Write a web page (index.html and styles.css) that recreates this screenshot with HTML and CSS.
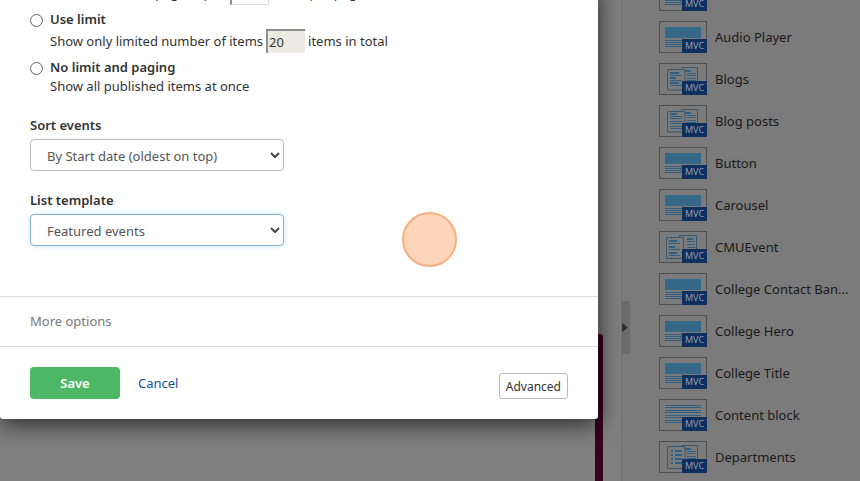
FILE: index.html
```html
<!DOCTYPE html>
<html lang="en">
<head>
<meta charset="utf-8">
<title>Edit events widget</title>
<link rel="stylesheet" href="styles.css">
</head>
<body>
<svg class="symbols" aria-hidden="true">
  <symbol id="banner" viewBox="0 0 48 32">
    <path class="fill" d="M6 6h36v11H6z"/>
    <path class="line" d="M6 19.5h36M6 21.5h36M6 23.5h36M6 25.5h36"/>
  </symbol>
  <symbol id="text" viewBox="0 0 48 32">
    <path class="line" d="M6 6.5h36M6 8.5h36M6 11.5h36M6 13.5h36M6 16.5h36M6 18.5h36M6 21.5h36M6 23.5h36"/>
  </symbol>
  <symbol id="back" viewBox="0 0 48 32">
    <path class="page" d="M22.5 5.500v-1h16v17h-10"/>
    <path class="bold" d="M26 8h6"/>
    <path class="line" d="M28 10.500h9M28 12.500h9M28 15.500h9M28 17.500h9"/>
  </symbol>
  <symbol id="blogs" viewBox="0 0 48 32">
    <use href="#back"/>
    <path class="page" d="M8.500 6.500h17.500v20.500h-17.500z"/>
    <path class="bold" d="M11 10h9M11 15h6M11 20h9"/>
    <path class="line" d="M11 12.500h12M11 17.500h12M11 22.500h12"/>
  </symbol>
  <symbol id="posts" viewBox="0 0 48 32">
    <use href="#back"/>
    <path class="page" d="M8.500 6.500h17.500v20.500h-17.500z"/>
    <path class="bold" d="M11 9h7"/>
    <path class="line" d="M11 11.500h12M11 13.500h12M11 16.500h12M11 18.500h12M11 21.500h12M11 23.500h12"/>
  </symbol>
  <symbol id="event" viewBox="0 0 48 32">
    <path class="page" d="M20.500 6.500v-2h17v17h-10"/>
    <path class="bold" d="M28 8h6"/>
    <path class="line" d="M28 10.500h8M28 13.500h8M28 16.500h8"/>
    <path class="page" d="M7.500 6.500h17v21h-17z"/>
    <path class="bold" d="M10 10h8M10 16h6M10 22h8"/>
    <path class="line" d="M10 12.500h11M10 18.500h11M10 24.500h11"/>
  </symbol>
  <symbol id="list" viewBox="0 0 48 32">
    <use href="#back"/>
    <path class="page" d="M8.500 5.500h17.500v22h-17.500z"/>
    <path class="bold" d="M12 10h2M16 10h7M12 14h2M16 14h7M12 18h2M16 18h7M12 22h2M16 22h7"/>
  </symbol>
</svg>

<main class="canvas"><div class="block"></div></main>

<aside class="sidebar">
  <button class="collapse" aria-label="Toggle widgets panel"><svg viewBox="0 0 5 8"><path d="M0 0l5 4-5 4z"/></svg></button>
  <ul class="widgets">
    <li><span class="thumb"><svg><use href="#banner"/></svg><b>MVC</b></span><span></span></li>
    <li><span class="thumb"><svg><use href="#banner"/></svg><b>MVC</b></span><span>Audio Player</span></li>
    <li><span class="thumb"><svg><use href="#blogs"/></svg><b>MVC</b></span><span>Blogs</span></li>
    <li><span class="thumb"><svg><use href="#posts"/></svg><b>MVC</b></span><span>Blog posts</span></li>
    <li><span class="thumb"><svg><use href="#banner"/></svg><b>MVC</b></span><span>Button</span></li>
    <li><span class="thumb"><svg><use href="#banner"/></svg><b>MVC</b></span><span>Carousel</span></li>
    <li><span class="thumb"><svg><use href="#event"/></svg><b>MVC</b></span><span>CMUEvent</span></li>
    <li><span class="thumb"><svg><use href="#banner"/></svg><b>MVC</b></span><span>College Contact Ban...</span></li>
    <li><span class="thumb"><svg><use href="#banner"/></svg><b>MVC</b></span><span>College Hero</span></li>
    <li><span class="thumb"><svg><use href="#banner"/></svg><b>MVC</b></span><span>College Title</span></li>
    <li><span class="thumb"><svg><use href="#text"/></svg><b>MVC</b></span><span>Content block</span></li>
    <li><span class="thumb"><svg><use href="#list"/></svg><b>MVC</b></span><span>Departments</span></li>
  </ul>
</aside>

<form class="dialog" role="dialog" aria-label="Events">
  <div class="fields">
    <div class="desc with-input"><label for="page-size">Divide the list on pages up to</label><input id="page-size" class="count active" type="text" value="20"><span>items per page</span></div>
    <div class="option"><input type="radio" name="limit" id="use-limit"><label for="use-limit">Use limit</label></div>
    <div class="desc with-input"><label for="limit-size">Show only limited number of items</label><input id="limit-size" class="count" type="text" value="20" disabled><span>items in total</span></div>
    <div class="option"><input type="radio" name="limit" id="no-limit"><label for="no-limit">No limit and paging</label></div>
    <div class="desc">Show all published items at once</div>
    <div class="field">
      <label for="sort">Sort events</label>
      <div class="select"><select id="sort"><option>By Start date (oldest on top)</option></select><svg viewBox="0 0 10 6"><path d="M1 1l4 4 4-4"/></svg></div>
    </div>
    <div class="field">
      <label for="template">List template</label>
      <div class="select focused"><select id="template"><option>Featured events</option></select><svg viewBox="0 0 10 6"><path d="M1 1l4 4 4-4"/></svg></div>
    </div>
  </div>
  <div class="more"><a href="#more">More options</a></div>
  <footer class="actions">
    <button class="save" type="button">Save</button>
    <a class="cancel" href="#cancel">Cancel</a>
    <button class="advanced" type="button">Advanced</button>
  </footer>
</form>
<div class="click-marker"></div>
</body>
</html>
```

FILE: styles.css
```css
* { box-sizing: border-box; }

body {
  margin: 0;
  height: 100vh;
  display: flex;
  overflow: hidden;
  position: relative;
  background: #808080;
  color: #333;
  font: 13px/19px "Noto Sans", "Open Sans", sans-serif;
}

button, input, select { font: inherit; color: inherit; }
a { text-decoration: none; }
.symbols { position: absolute; width: 0; height: 0; }

.fill { fill: #356787; }
.line, .bold, .page { fill: none; stroke: #2f5f82; }
.bold { stroke-width: 2; }
.page { fill: #7b7b7b; stroke: #38586f; }

/* Page canvas behind the dialog */
.canvas { flex: 1; display: flex; padding: 334px 18px 0 0; }
.block { flex: 1; border-right: 8px solid #38001c; border-top-right-radius: 3px; }

/* Widgets panel */
.sidebar {
  width: 239px;
  display: flex;
  flex-direction: column;
  justify-content: flex-end;
  position: relative;
  overflow: hidden;
  border-left: 1px solid #737373;
  background: #7b7b7b;
  color: #1a1a1a;
}
.collapse {
  position: absolute;
  left: 0;
  top: 301px;
  width: 8px;
  height: 53px;
  padding: 0;
  border: 0;
  display: flex;
  align-items: center;
  background: #6c6c6c;
}
.collapse svg { width: 6px; height: 9px; fill: #2b2b2b; }
.widgets {
  list-style: none;
  margin: 0;
  padding: 0 8px 8px 37px;
  display: flex;
  flex-direction: column;
  gap: 10px;
}
.widgets li { display: flex; gap: 8px; align-items: center; white-space: nowrap; }
.thumb { position: relative; flex: none; width: 48px; height: 32px; border: 1px solid #505050; }
.thumb svg { display: block; width: 48px; height: 32px; margin: -1px; }
.thumb b {
  position: absolute;
  right: -1px;
  bottom: -1px;
  width: 25px;
  height: 14px;
  background: #0d305f;
  color: #8d9cb0;
  font-size: 9px;
  font-weight: 400;
  line-height: 14px;
  text-align: center;
}

/* Dialog */
.dialog {
  position: absolute;
  left: 0;
  right: 262px;
  bottom: 62px;
  background: #fff;
  border-radius: 0 0 3px 3px;
  box-shadow: 0 5px 24px rgba(0, 0, 0, 0.7);
}
.fields { padding: 0 30px 50px; }
.option { display: flex; align-items: center; gap: 7px; margin-top: 5px; }
.option input {
  appearance: none;
  width: 13px;
  height: 13px;
  margin: 1px 0 0;
  border: 1px solid #666;
  border-radius: 50%;
  background: #fff;
}
.option label, .field label { font-weight: 600; }
.desc { padding-left: 20px; }
.with-input { display: flex; align-items: center; gap: 3px; }
.count {
  width: 39px;
  height: 24px;
  padding: 0 0 0 1px;
  border: 0 solid #8f8f8f;
  border-width: 2px 0 0 2px;
  background: #ebebe4;
}
.count.active { background: #fff; border-width: 2px 1px 1px 2px; border-color: #8f8f8f #ddd #ddd #8f8f8f; }
.field { margin-top: 20px; display: flex; flex-direction: column; gap: 4px; }
.select { position: relative; width: 254px; }
.select select {
  appearance: none;
  display: block;
  width: 100%;
  height: 32px;
  padding: 2px 24px 0 16px;
  border: 1px solid #bbb;
  border-radius: 4px;
  background: #fff;
  color: #555;
}
.select.focused select { border-color: #84b4d0; box-shadow: 0 0 5px #bfe4fa; }
.select svg { position: absolute; right: 4px; top: 13px; width: 10px; height: 6px; fill: none; stroke: #444; stroke-width: 2; }

.more { border-top: 1px solid #ddd; padding: 15px 30px; }
.more a { color: #777; }
.actions {
  border-top: 1px solid #ddd;
  padding: 20px 30px;
  display: flex;
  align-items: center;
  gap: 18px;
}
.save {
  width: 90px;
  height: 32px;
  border: 0;
  border-radius: 4px;
  background: #4cb764;
  color: #fff;
  font-weight: 600;
}
.cancel { color: #10519c; }
.advanced {
  align-self: flex-end;
  height: 26px;
  margin-left: auto;
  padding: 0 6px;
  border: 1px solid #bbb;
  border-radius: 3px;
  background: #fff;
  font-size: 12px;
}

/* Marks where the pointer was pressed */
.click-marker {
  position: absolute;
  left: 402px;
  top: 212px;
  width: 55px;
  height: 55px;
  border: 2px solid #f5b183;
  border-radius: 50%;
  background: #fdd6b9;
}
```
